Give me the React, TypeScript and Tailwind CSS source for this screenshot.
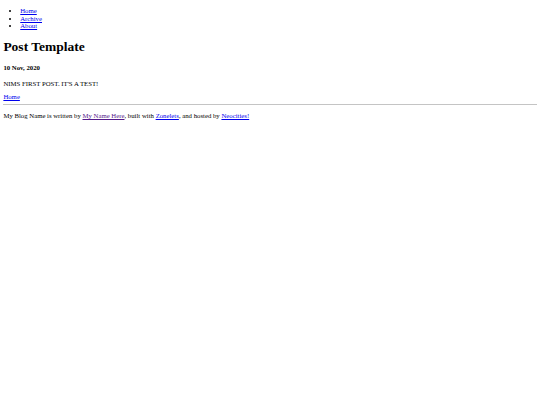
export default function App() {
  return (
    <div className="min-h-[405px] bg-white px-[3.375px] text-[6.75px] leading-[1.149] text-black [font-family:'Liberation_Serif',serif]">
      <ul className="mt-[6.75px] mb-[6.75px] list-disc pl-[16.875px]">
        <li>
          <a href="#" className="text-[#0000ee] underline">Home</a>
        </li>
        <li>
          <a href="#" className="text-[#0000ee] underline">Archive</a>
        </li>
        <li>
          <a href="#" className="text-[#0000ee] underline">About</a>
        </li>
      </ul>
      <h1 className="my-[9.045px] text-[13.5px] font-bold leading-[1.149]">Post Template</h1>
      <h4 className="my-[8.98px] font-bold">10 Nov, 2020</h4>
      <p className="mt-[6.75px] mb-[5.25px]">NIMS FIRST POST. IT'S A TEST!</p>
      <div>
        <a href="#" className="text-[#0000ee] underline">Home</a>
      </div>
      <hr className="my-[3.375px] h-px border-0 bg-[#c4c4c4]" />
      <p className="my-[6.75px]">
        My Blog Name is written by{" "}
        <a href="#" className="text-[#551a8b] underline">My Name Here</a>, built with{" "}
        <a href="#" className="text-[#0000ee] underline">Zonelets</a>, and hosted by{" "}
        <a href="#" className="text-[#0000ee] underline">Neocities!</a>
      </p>
    </div>
  );
}
